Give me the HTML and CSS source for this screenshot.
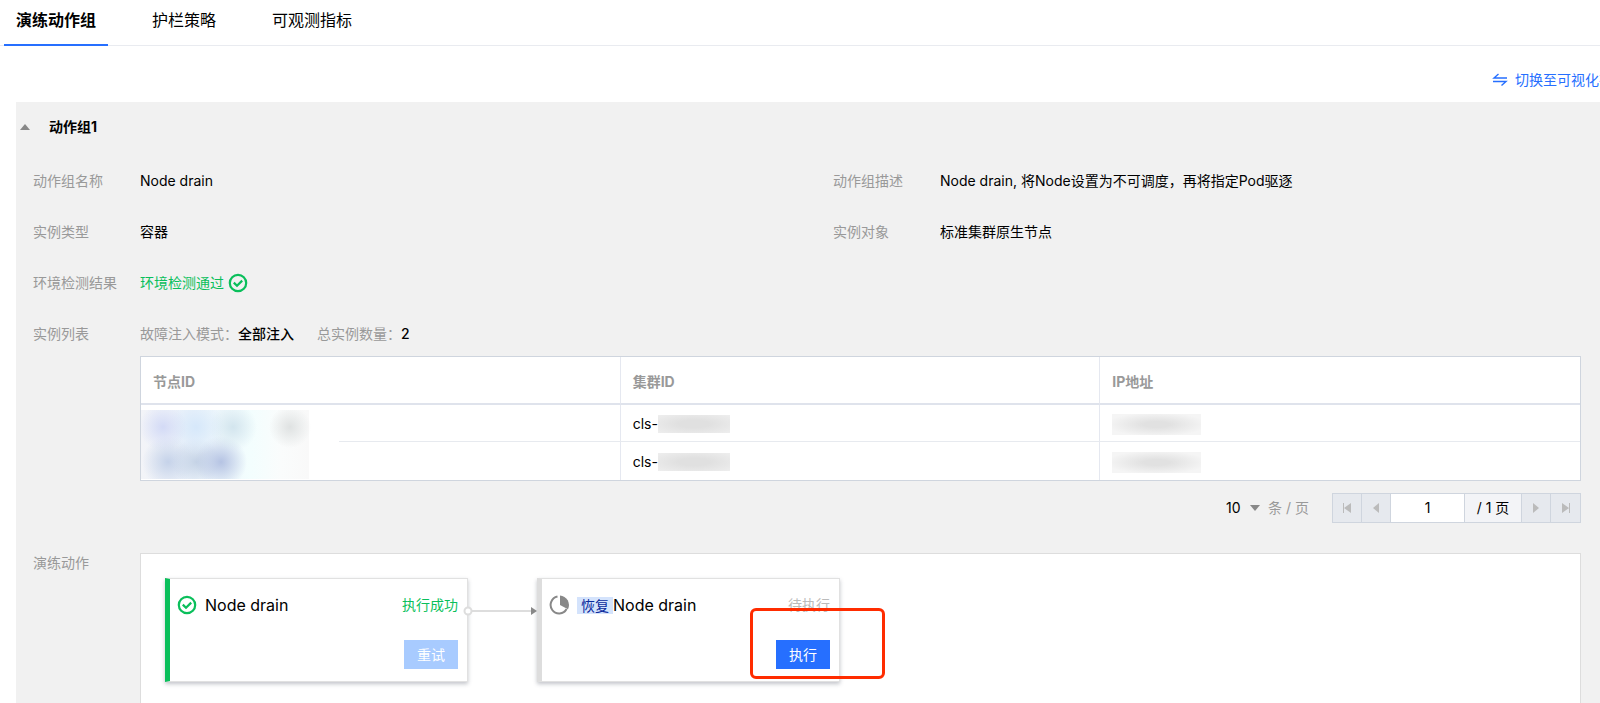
FILE: index.html
```html
<!DOCTYPE html>
<html lang="zh-CN">

<head>
    <meta charset="UTF-8">
    <meta name="viewport" content="width=device-width, initial-scale=1.0">
    <title>演练动作组</title>
    <link rel="stylesheet" href="styles.css">
</head>

<body>
    <nav class="tabs">
        <a class="tab active" href="#actions">演练动作组</a>
        <a class="tab" href="#guard">护栏策略</a>
        <a class="tab" href="#metrics">可观测指标</a>
    </nav>

    <div class="toolbar">
        <a class="switch-link" href="#visual">
            <svg width="16" height="16" viewBox="0 0 16 16" fill="none" stroke="currentColor" stroke-width="1.4">
                <path d="M15 6H2l4.500-4M1 9.500h13L9.500 13.500" />
            </svg>
            <span>切换至可视化布局</span>
        </a>
    </div>

    <main class="panel">
        <button class="panel-title" type="button">
            <span class="triangle up"></span>
            <span>动作组1</span>
        </button>

        <dl class="info-grid">
            <div class="field">
                <dt>动作组名称</dt>
                <dd>Node drain</dd>
            </div>
            <div class="field">
                <dt>动作组描述</dt>
                <dd>Node drain, 将Node设置为不可调度，再将指定Pod驱逐</dd>
            </div>
            <div class="field">
                <dt>实例类型</dt>
                <dd>容器</dd>
            </div>
            <div class="field">
                <dt>实例对象</dt>
                <dd>标准集群原生节点</dd>
            </div>
            <div class="field">
                <dt>环境检测结果</dt>
                <dd class="passed">
                    <span>环境检测通过</span>
                    <svg class="icon" viewBox="0 0 20 20" fill="none" stroke="currentColor" stroke-width="2.200">
                        <circle cx="10" cy="10" r="8.200" />
                        <path d="M5.800 9.600l3.200 3.200 5.200-5.200" />
                    </svg>
                </dd>
            </div>
        </dl>

        <div class="field block">
            <div class="label">实例列表</div>
            <div class="content">
                <div class="summary">
                    <span>故障注入模式：<b>全部注入</b></span>
                    <span>总实例数量：<b>2</b></span>
                </div>

                <table class="instances">
                    <thead>
                        <tr>
                            <th>节点ID</th>
                            <th>集群ID</th>
                            <th>IP地址</th>
                        </tr>
                    </thead>
                    <tbody>
                        <tr>
                            <td class="node-cell"><span class="node-mask"></span></td>
                            <td><div class="cell">cls-<span class="mask"></span></div></td>
                            <td><div class="cell"><span class="mask ip"></span></div></td>
                        </tr>
                        <tr>
                            <td></td>
                            <td><div class="cell">cls-<span class="mask"></span></div></td>
                            <td><div class="cell"><span class="mask ip"></span></div></td>
                        </tr>
                    </tbody>
                </table>

                <div class="pagination">
                    <label class="page-size">
                        <select aria-label="每页条数">
                            <option>10</option>
                            <option>20</option>
                        </select>
                        <span class="triangle down"></span>
                        <span>条 / 页</span>
                    </label>
                    <div class="pager">
                        <button type="button" aria-label="首页" disabled>
                            <svg width="8" height="10" viewBox="0 0 8 10"><path d="M0 0h1v10H0zM8 0v10L1 5z" /></svg>
                        </button>
                        <button type="button" aria-label="上一页" disabled>
                            <svg width="8" height="10" viewBox="0 0 8 10"><path d="M7 0v10L1 5z" /></svg>
                        </button>
                        <input type="text" value="1" aria-label="页码">
                        <span class="page-total">/ 1 页</span>
                        <button type="button" aria-label="下一页" disabled>
                            <svg width="8" height="10" viewBox="0 0 8 10"><path d="M1 0v10l6-5z" /></svg>
                        </button>
                        <button type="button" aria-label="末页" disabled>
                            <svg width="8" height="10" viewBox="0 0 8 10"><path d="M7 0h1v10H7zM0 0v10l7-5z" /></svg>
                        </button>
                    </div>
                </div>
            </div>
        </div>

        <div class="field">
            <div class="label">演练动作</div>
            <div class="content flow">
                <section class="card success">
                    <header>
                        <svg class="icon" viewBox="0 0 20 20" fill="none" stroke="currentColor" stroke-width="2.200">
                            <circle cx="10" cy="10" r="8.200" />
                            <path d="M5.800 9.600l3.200 3.200 5.200-5.200" />
                        </svg>
                        <h2>Node drain</h2>
                        <span class="status">执行成功</span>
                    </header>
                    <button class="btn" type="button" disabled>重试</button>
                </section>

                <svg class="connector" width="74" height="10" viewBox="0 0 74 10">
                    <path d="M9 5h60" stroke="#ddd" stroke-width="2" />
                    <circle cx="5" cy="5" r="3.500" fill="#fff" stroke="#ddd" stroke-width="2" />
                    <path d="M68 1v8l6-4z" fill="#888" />
                </svg>

                <section class="card pending">
                    <header>
                        <svg class="icon" viewBox="0 0 20 20">
                            <path d="M8.500 1.600A8.500 8.500 0 1 0 17.600 14" fill="none" stroke="currentColor" stroke-width="2" />
                            <path d="M11 0.500V10l8 4.200A9.500 9.500 0 0 0 11 0.500z" fill="currentColor" />
                        </svg>
                        <h2><span class="tag">恢复</span>Node drain</h2>
                        <span class="status">待执行</span>
                    </header>
                    <button class="btn" type="button">执行</button>
                    <span class="highlight"></span>
                </section>
            </div>
        </div>
    </main>
</body>

</html>
```

FILE: styles.css
```css
* {
    box-sizing: border-box;
}

body {
    margin: 0;
    height: 100vh;
    overflow: hidden;
    background-color: #fff;
    color: #000;
    font-family: Inter, "Noto Sans CJK SC", sans-serif;
    font-size: 14px;
    line-height: 20px;
}

button,
input,
select {
    font: inherit;
    color: inherit;
    margin: 0;
    padding: 0;
    border: none;
    border-radius: 0;
    background: none;
}

a {
    text-decoration: none;
}

/* tabs */
.tabs {
    display: flex;
    gap: 32px;
    padding-left: 4px;
    box-shadow: inset 0 -1px 0 #e9ebf0;
}

.tab {
    padding: 0 12px 4px;
    border-bottom: 2px solid transparent;
    color: #000;
    font-size: 16px;
    line-height: 40px;
}

.tab.active {
    border-bottom-color: #266fff;
    font-weight: bold;
}

.toolbar {
    display: flex;
    justify-content: flex-end;
    padding: 24px 0 12px;
}

.switch-link {
    display: flex;
    align-items: center;
    gap: 7px;
    margin-right: -27px;
    color: #266fff;
    white-space: nowrap;
}

/* panel */
.panel {
    margin-left: 16px;
    padding: 15px 19px 40px 17px;
    background-color: #f1f1f1;
}

.panel-title {
    display: flex;
    align-items: center;
    gap: 19px;
    margin: 0 0 34px -13px;
    font-weight: bold;
}

.triangle {
    border: 5px solid transparent;
}

.triangle.up {
    border-top: none;
    border-bottom: 6px solid #888;
}

.triangle.down {
    border-bottom: none;
    border-top: 6px solid #888;
}

.info-grid {
    display: grid;
    grid-template-columns: 1fr 1fr;
    row-gap: 31px;
    margin: 0 -52px 31px 0;
}

.field {
    display: grid;
    grid-template-columns: 107px 1fr;
}

.field.block {
    margin-bottom: 30px;
}

dt,
.label {
    color: #999;
}

dd {
    margin: 0;
}

.icon {
    flex: none;
    width: 20px;
    height: 20px;
}

.passed {
    display: flex;
    align-items: center;
    gap: 4px;
    color: #0abf5b;
}

.summary {
    display: flex;
    gap: 23px;
    margin-bottom: 12px;
    color: #999;
}

.summary b {
    color: #000;
    font-weight: 500;
}

/* instance table */
.instances {
    width: 100%;
    table-layout: fixed;
    border: 1px solid #cfd5de;
    border-spacing: 0;
    background-color: #fff;
}

.instances th,
.instances td {
    padding: 0 12px;
    border-right: 1px solid #e5e8f0;
    text-align: left;
}

.instances th:last-child,
.instances td:last-child {
    border-right: none;
}

.instances th {
    height: 48px;
    padding-top: 3px;
    border-bottom: 2px solid #dfe3ec;
    color: #999;
}

.instances td {
    height: 38px;
    padding-top: 2px;
}

.instances tr:first-child td {
    height: 37px;
    border-bottom: 1px solid #e7eaef;
}

.cell {
    display: flex;
    align-items: center;
}

.mask {
    width: 72px;
    height: 18px;
    background: radial-gradient(ellipse, #e0e0e0 30%, #eee 100%);
}

.mask.ip {
    width: 89px;
    height: 21px;
    background: radial-gradient(ellipse, #e1e1e1 20%, #f5f5f5 80%);
}

.node-cell {
    position: relative;
}

/* blurred node names, drawn over both rows */
.node-mask {
    position: absolute;
    top: 5px;
    left: 0;
    width: 198px;
    height: 69px;
    background:
        radial-gradient(circle at 22px 17px, #d3daf6, transparent 24px),
        radial-gradient(circle at 55px 17px, #d6e8fa, transparent 28px),
        radial-gradient(circle at 92px 17px, #d3e5ee, transparent 24px),
        radial-gradient(circle at 149px 17px, #dfe2e2, transparent 21px),
        radial-gradient(circle at 80px 52px, #b5c3e3, transparent 26px),
        radial-gradient(circle at 55px 52px, #c5d3e6, transparent 24px),
        radial-gradient(circle at 27px 52px, #c5d2e9, transparent 26px),
        linear-gradient(90deg, #f3f4f8 0, #ebf2fa 50px, #f3fefe 110px, #fafcfc 140px, #f9f9f9 168px, #fff 168px);
}

/* pagination */
.pagination {
    display: flex;
    justify-content: flex-end;
    align-items: center;
    gap: 23px;
    margin-top: 12px;
}

.page-size {
    display: flex;
    align-items: center;
    gap: 8px;
    color: #999;
}

.page-size select {
    appearance: none;
    width: 16px;
    color: #000;
}

.pager {
    display: flex;
    height: 30px;
    border: 1px solid #cfd5de;
    background-color: #f3f4f7;
}

.pager > * {
    border-right: 1px solid #cfd5de;
}

.pager > :last-child {
    border-right: none;
}

.pager button {
    display: flex;
    align-items: center;
    justify-content: center;
    width: 29px;
    background-color: #e6e9ee;
}

.pager svg {
    fill: #bbb;
}

.pager input {
    width: 74px;
    background-color: #fff;
    text-align: center;
}

.page-total {
    width: 57px;
    line-height: 28px;
    text-align: center;
}

/* action flow */
.flow {
    display: flex;
    align-items: flex-start;
    padding: 24px 24px 60px;
    border: 1px solid #ddd;
    background-color: #fff;
}

.card {
    position: relative;
    display: flex;
    flex-direction: column;
    align-items: flex-end;
    gap: 25px;
    width: 303px;
    padding: 16px 9px 12px 7px;
    border: 1px solid #e1e1e1;
    border-left: 5px solid #ddd;
    box-shadow: 0 2px 4px rgba(54, 58, 80, 0.3);
}

.card.success {
    border-left-color: #0abf5b;
    color: #0abf5b;
}

.card.pending {
    color: #888;
}

.card header {
    display: flex;
    align-items: center;
    align-self: stretch;
    gap: 8px;
}

.card h2 {
    flex: 1;
    margin: 0;
    color: #000;
    font-size: 16px;
    font-weight: normal;
}

.tag {
    display: inline-block;
    padding: 0 4px;
    background-color: #d4e3fc;
    color: #0a2a9c;
    font-size: 14px;
    line-height: 17px;
}

.card.pending .status {
    color: #bbb;
}

.btn {
    width: 54px;
    height: 29px;
    background-color: #266fff;
    color: #fff;
}

.btn:disabled {
    background-color: #a8cbff;
}

.connector {
    position: relative;
    z-index: 1;
    flex: none;
    margin: 28px 0 0 -5px;
}

.highlight {
    position: absolute;
    top: 29px;
    right: -46px;
    width: 135px;
    height: 71px;
    border: 3px solid #ff2c00;
    border-radius: 6px;
}
```
